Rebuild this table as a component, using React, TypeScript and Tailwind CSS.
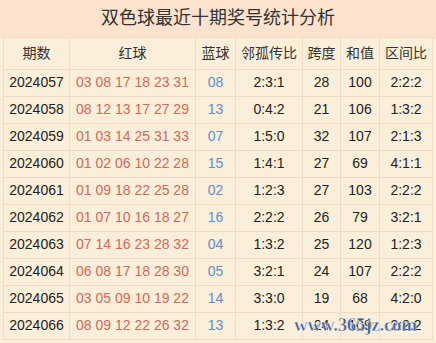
import React from 'react';

const rows = [
  ['2024057', '03 08 17 18 23 31', '08', '2:3:1', '28', '100', '2:2:2'],
  ['2024058', '08 12 13 17 27 29', '13', '0:4:2', '21', '106', '1:3:2'],
  ['2024059', '01 03 14 25 31 33', '07', '1:5:0', '32', '107', '2:1:3'],
  ['2024060', '01 02 06 10 22 28', '15', '1:4:1', '27', '69', '4:1:1'],
  ['2024061', '01 09 18 22 25 28', '02', '1:2:3', '27', '103', '2:2:2'],
  ['2024062', '01 07 10 16 18 27', '16', '2:2:2', '26', '79', '3:2:1'],
  ['2024063', '07 14 16 23 28 32', '04', '1:3:2', '25', '120', '1:2:3'],
  ['2024064', '06 08 17 18 28 30', '05', '3:2:1', '24', '107', '2:2:2'],
  ['2024065', '03 05 09 10 19 22', '14', '3:3:0', '19', '68', '4:2:0'],
  ['2024066', '08 09 12 22 26 32', '13', '1:3:2', '24', '109', '2:2:2'],
];

const heads = ['期数', '红球', '蓝球', '邻孤传比', '跨度', '和值', '区间比'];
const widths = ['w-[66px]', 'w-[126px]', 'w-[40px]', 'w-[67px]', 'w-[38px]', 'w-[39px]', 'w-[53px]'];

export default function App() {
  return (
    <div
      className="relative w-[436px] h-[343px] bg-[#fcefd9] px-[3px] pb-[3px] overflow-hidden"
      style={{ fontFamily: '"Liberation Sans", "Noto Sans CJK SC", sans-serif' }}
    >
      <div className="h-[38px] bg-[#fde2ce] border-b border-[#f1dcc1] flex items-center justify-center text-[18px] text-[#333] -mx-[3px]">
        双色球最近十期奖号统计分析
      </div>
      <table className="border-collapse table-fixed text-[14px]">
        <thead>
          <tr className="h-[31px]">
            {heads.map((h, i) => (
              <th key={h} className={`${widths[i]} font-normal text-[#333] border border-[#f1dcc1] border-t-0 p-0`}>
                {h}
              </th>
            ))}
          </tr>
        </thead>
        <tbody>
          {rows.map((r) => (
            <tr key={r[0]} className="h-[27px]">
              <td className="text-center text-[#222] border border-[#f1dcc1] p-0">{r[0]}</td>
              <td className="text-center text-[#d2675a] border border-[#f1dcc1] p-0">{r[1]}</td>
              <td className="text-center text-[#5b8fd0] border border-[#f1dcc1] p-0">{r[2]}</td>
              <td className="text-center text-[#222] border border-[#f1dcc1] p-0">{r[3]}</td>
              <td className="text-center text-[#222] border border-[#f1dcc1] p-0">{r[4]}</td>
              <td className="text-center text-[#222] border border-[#f1dcc1] p-0">{r[5]}</td>
              <td className="text-center text-[#222] border border-[#f1dcc1] p-0">{r[6]}</td>
            </tr>
          ))}
        </tbody>
      </table>
      {/* watermark */}
      <div
        className="absolute left-[294px] top-[313px] text-[19px] leading-[24px] font-bold text-[#3f5f9c] tracking-[-0.3px]"
        style={{ fontFamily: '"Liberation Serif", serif', WebkitTextStroke: '0.4px #fff' }}
      >
        www.365jz.com
      </div>
    </div>
  );
}
